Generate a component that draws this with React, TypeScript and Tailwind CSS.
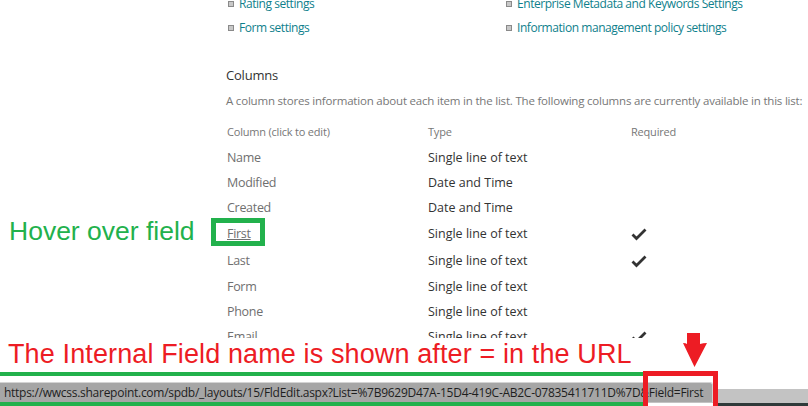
import React from 'react'

const link = 'text-[#0f7f8c]'
const ui = { fontFamily: '"Open Sans", "Noto Sans", sans-serif' }
const arial = { fontFamily: '"Liberation Sans", Arial, sans-serif' }

const rows = [
  { name: 'Name', type: 'Single line of text', req: false, h: 'h-[25px]' },
  { name: 'Modified', type: 'Date and Time', req: false, h: 'h-[25px]' },
  { name: 'Created', type: 'Date and Time', req: false, h: 'h-[25px]' },
  { name: 'First', type: 'Single line of text', req: true, h: 'h-[27px]' },
  { name: 'Last', type: 'Single line of text', req: true, h: 'h-[27px]' },
  { name: 'Form', type: 'Single line of text', req: false, h: 'h-[25px]' },
  { name: 'Phone', type: 'Single line of text', req: false, h: 'h-[25px]' },
  { name: 'Email', type: 'Single line of text', req: true, h: 'h-[25px]' },
]

function Bullet({ children }: { children: React.ReactNode }) {
  return (
    <div className="flex items-center h-[24px]">
      <span className="ml-[2px] mr-[5px] w-[6px] h-[6px] border border-[#8a8a8a] bg-[#c8c8c8]"></span>
      <span className={`${link} text-[12px] tracking-[-0.45px]`}>{children}</span>
    </div>
  )
}

function Check() {
  return (
    <svg width="16" height="13" viewBox="0 0 16 13" fill="none">
      <path d="M1.5 6.5L5.5 10.5L14.5 1.5" stroke="#333" strokeWidth="2.8" />
    </svg>
  )
}

export default function App() {
  return (
    <div className="relative w-[808px] h-[406px] overflow-hidden bg-white" style={ui}>
      {/* SharePoint list settings */}
      <div className="pl-[226px] mt-[-8px]">
        <div className="grid grid-cols-[278px_auto]">
          <Bullet>Rating settings</Bullet>
          <Bullet>Enterprise Metadata and Keywords Settings</Bullet>
          <Bullet>Form settings</Bullet>
          <Bullet>Information management policy settings</Bullet>
        </div>

        <div className="mt-[24px] h-[24px] flex items-center text-[13px] text-[#333] tracking-[-0.2px]">Columns</div>
        <div className="mt-[1px] h-[24px] flex items-center text-[11.5px] text-[#777] whitespace-nowrap tracking-[-0.2px]">
          A column stores information about each item in the list. The following columns are currently available in this list:
        </div>

        <div className="mt-[7px] grid grid-cols-[202px_203px_auto] h-[24px] items-center text-[11px] text-[#777] tracking-[-0.2px]">
          <div className="pl-[1px]">Column (click to edit)</div>
          <div>Type</div>
          <div>Required</div>
        </div>

        <div className="mt-[2px]">
          {rows.map((r) => (
            <div key={r.name} className={`grid grid-cols-[202px_203px_auto] items-center ${r.h} text-[12.5px]`}>
              <div className={`pl-[1px] text-[#6f6f6f] tracking-[-0.3px] ${r.name === 'First' ? 'underline' : ''}`}>{r.name}</div>
              <div className="text-[#333]">{r.type}</div>
              <div>{r.req && <Check />}</div>
            </div>
          ))}
        </div>
      </div>

      {/* annotation: hover */}
      <div className="absolute left-[9px] top-[216px] text-[26.5px] leading-[30px] text-[#22b14c]" style={arial}>
        Hover over field
      </div>
      <div className="absolute left-[211px] top-[218px] w-[54px] h-[28px] border-[5px] border-[#22b14c]"></div>

      {/* annotation: bottom */}
      <div className="absolute left-0 right-0 top-[338px] bottom-0 bg-white">
        <div className="pl-[8px] pt-[1px] text-[27px] leading-[30px] text-[#ed1c24] tracking-[0.12px]" style={arial}>
          The Internal Field name is shown after = in the URL
        </div>
      </div>

      <svg className="absolute left-[682px] top-[333px]" width="26" height="34" viewBox="0 0 26 34">
        <path d="M5 0H18V11Q21 10 25 10L12.5 34L1 10Q4 10 5 11Z" fill="#ed1c24" />
      </svg>

      <div className="absolute left-0 top-[372px] w-[643px] h-[4px] bg-[#22b14c]"></div>

      {/* status bar */}
      <div className="absolute left-0 right-0 top-[389px] h-[14px] bg-[#c3c3c3]"></div>
      <div className="absolute left-[717px] right-0 top-[403px] h-[3px] bg-[#2f3a3a]"></div>
      <div className="absolute left-0 top-[382px] w-[713px] h-[20px] bg-[#a6a6a6] border-t border-r border-[#d4d4d4] rounded-tr-[3px] flex items-center pl-[4px] text-[12px] text-[#1e1e1e] whitespace-nowrap tracking-[-0.27px]">
        https://wwcss.sharepoint.com/spdb/_layouts/15/FldEdit.aspx?List=%7B9629D47A-15D4-419C-AB2C-07835411711D%7D&amp;Field=First
      </div>
      <div className="absolute left-0 top-[402px] w-[643px] h-[4px] bg-[#22b14c]"></div>

      <div className="absolute left-[643px] top-[371px] w-[75px] h-[40px] border-[5px] border-[#ed1c24]"></div>
    </div>
  )
}
